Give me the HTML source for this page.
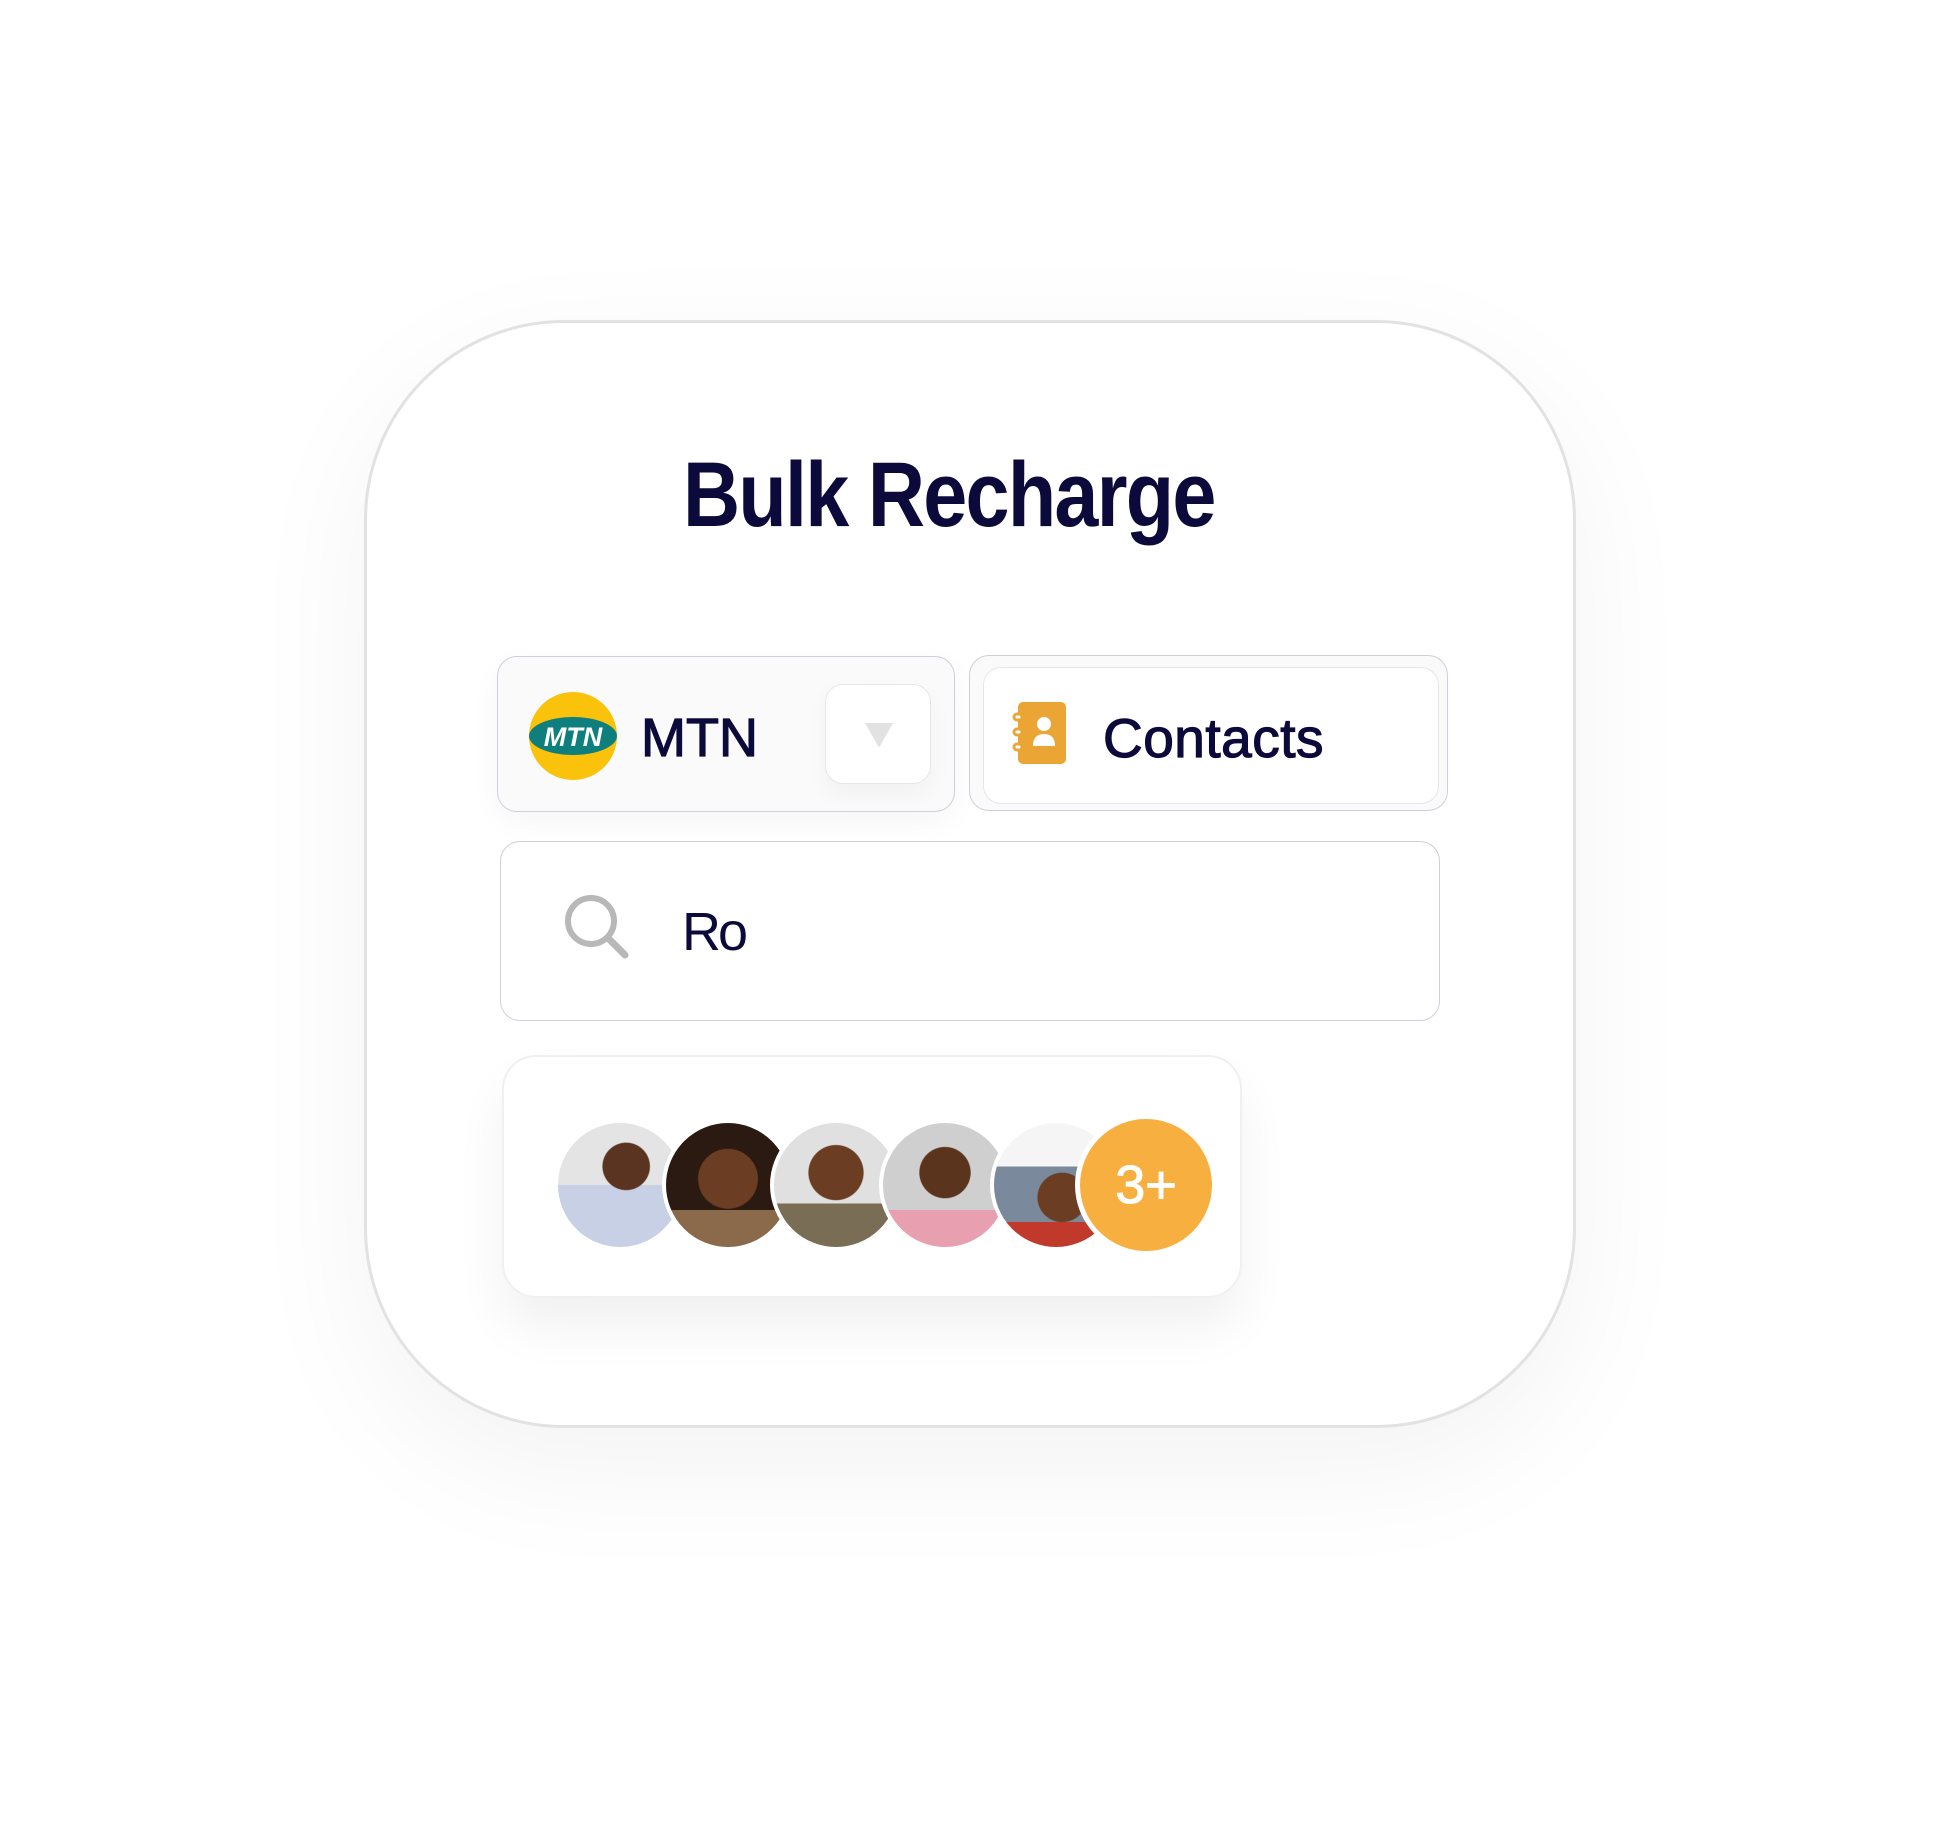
<!DOCTYPE html>
<html><head><meta charset="utf-8"><style>
*{margin:0;padding:0;box-sizing:border-box}
body{width:1933px;height:1828px;background:#fff;position:relative;overflow:hidden;font-family:"Liberation Sans",sans-serif;color:#0c0a3a}
.abs{position:absolute}
.card{left:364px;top:320px;width:1212px;height:1108px;border:3px solid #e2e2e2;border-radius:200px;background:#fff;box-shadow:0 40px 160px rgba(0,0,0,0.05)}
.title{left:683px;top:443px;font-size:92px;font-weight:bold;letter-spacing:-2px;color:#0c0a3a;transform:scaleX(0.86);transform-origin:left top}
.box{border:1.5px solid #cfcfdc;border-radius:20px}
.av{width:132px;height:132px;border-radius:50%;border:4px solid #fff;top:1119px}
.med{-webkit-text-stroke:1.2px #0c0a3a}
</style></head><body>
<div class="abs card"></div>
<div class="abs title">Bulk Recharge</div>

<div class="abs box" style="left:497px;top:656px;width:458px;height:156px;background:#fafafa;box-shadow:0 10px 30px rgba(0,0,0,0.04)"></div>
<svg class="abs" style="left:528px;top:691px" width="90" height="90" viewBox="0 0 90 90">
<circle cx="45" cy="45" r="44" fill="#fac20a"/>
<ellipse cx="45" cy="45" rx="44" ry="19" fill="#0e7f7d"/>
<text x="45" y="55" text-anchor="middle" font-family="Liberation Sans" font-weight="bold" font-style="italic" font-size="27" fill="#fff">MTN</text>
</svg>
<div class="abs med" style="left:641px;top:707px;font-size:54px;">MTN</div>
<div class="abs" style="left:825px;top:684px;width:106px;height:100px;border:1.5px solid #e8e8e8;border-radius:18px;background:#fff;box-shadow:0 10px 25px rgba(0,0,0,0.04)"></div>
<svg class="abs" style="left:863px;top:721px" width="32" height="28" viewBox="0 0 32 28"><path d="M2 2 L30 2 L17 25 Q16 27 15 25 Z" fill="#e2e2e2"/></svg>

<div class="abs box" style="left:969px;top:655px;width:479px;height:156px;background:#fafafa"></div>
<div class="abs" style="left:983px;top:667px;width:456px;height:137px;border:1.5px solid #e6e6e6;border-radius:18px;background:#fff"></div>
<svg class="abs" style="left:1012px;top:700px" width="56" height="66" viewBox="0 0 56 66">
<rect x="6" y="2" width="48" height="62" rx="5" fill="#eba535"/>
<g fill="none" stroke="#eba535" stroke-width="3"><rect x="2" y="14" width="8" height="6" rx="3" fill="#fff"/><rect x="2" y="29" width="8" height="6" rx="3" fill="#fff"/><rect x="2" y="44" width="8" height="6" rx="3" fill="#fff"/></g>
<circle cx="32" cy="24" r="7" fill="#fff"/><path d="M21 46 Q21 34 32 34 Q43 34 43 46 Z" fill="#fff"/>
</svg>
<div class="abs med" style="left:1103px;top:706px;font-size:55px;letter-spacing:0.5px">Contacts</div>

<div class="abs box" style="left:500px;top:841px;width:940px;height:180px;background:#fff"></div>
<svg class="abs" style="left:561px;top:891px" width="72" height="72" viewBox="0 0 72 72"><circle cx="30" cy="30" r="23" fill="none" stroke="#b8b8b8" stroke-width="6"/><path d="M47 47 L64 64" stroke="#b8b8b8" stroke-width="7" stroke-linecap="round"/></svg>
<div class="abs" style="left:682px;top:901px;font-size:54px;letter-spacing:-3px">Ro</div>

<div class="abs" style="left:502px;top:1055px;width:740px;height:243px;border:2px solid #f0f0f0;border-radius:34px;background:#fff;box-shadow:0 30px 50px rgba(0,0,0,0.06)"></div>
<div class="abs av" style="left:554px;background:radial-gradient(circle at 55% 35%,#5a3420 0 22%,transparent 23%),linear-gradient(#e4e4e4 0 50%,#c8d0e6 50%)"></div>
<div class="abs av" style="left:662px;background:radial-gradient(circle at 50% 45%,#6b3d22 0 32%,transparent 33%),linear-gradient(#2a1a12 0 70%,#8b6a4c 70%)"></div>
<div class="abs av" style="left:770px;background:radial-gradient(circle at 50% 40%,#6b3d22 0 28%,transparent 29%),linear-gradient(#e0e0e0 0 65%,#7a6d55 65%)"></div>
<div class="abs av" style="left:879px;background:radial-gradient(circle at 50% 40%,#5a341c 0 26%,transparent 27%),linear-gradient(#cfcfcf 0 70%,#e8a0b0 70%)"></div>
<div class="abs av" style="left:990px;background:radial-gradient(circle at 55% 60%,#6b3d22 0 24%,transparent 25%),linear-gradient(#f5f5f5 0 35%,#7a8a9c 35% 80%,#c0392b 80%)"></div>
<div class="abs med" style="left:1075px;top:1114px;width:142px;height:142px;border-radius:50%;background:#f7b040;border:5px solid #fff;color:#fff;-webkit-text-stroke:1px #fff;font-size:54px;text-align:center;line-height:132px">3+</div>
</body></html>
